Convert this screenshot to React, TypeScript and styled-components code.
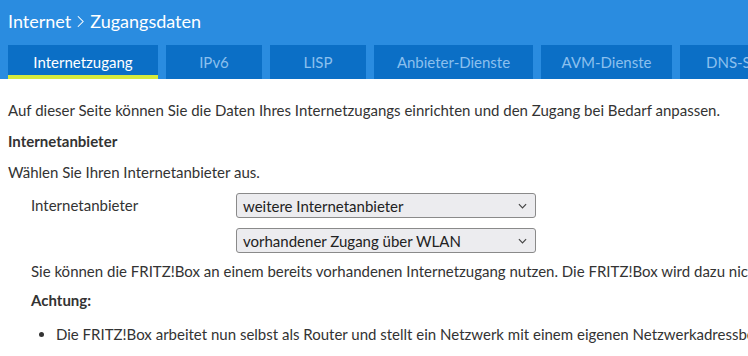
import React from "react";
import styled, { createGlobalStyle } from "styled-components";

const GlobalStyle = createGlobalStyle`
  html, body {
    margin: 0;
    padding: 0;
    background: #fff;
    font-family: "Lato", "Open Sans", sans-serif;
    color: #333;
  }
`;

const tabs = [
  { label: "Internetzugang", width: 150 },
  { label: "IPv6", width: 96 },
  { label: "LISP", width: 96 },
  { label: "Anbieter-Dienste", width: 159 },
  { label: "AVM-Dienste", width: 131 },
  { label: "DNS-Server", width: 131 },
];

const App = () => {
  return (
    <Wrapper>
      <GlobalStyle />
      <Header>
        <Title>
          Internet
          <Chevron viewBox="0 0 8 14">
            <path d="M1 1 L7 7 L1 13" fill="none" stroke="#fff" strokeWidth="1.2" />
          </Chevron>
          Zugangsdaten
        </Title>
        <TabBar>
          {tabs.map((t, i) => (
            <Tab key={t.label} $active={i === 0} style={{ width: t.width }}>
              {t.label}
            </Tab>
          ))}
        </TabBar>
      </Header>
      <Content>
        <Para>
          Auf dieser Seite können Sie die Daten Ihres Internetzugangs einrichten und den Zugang bei Bedarf anpassen.
        </Para>
        <Heading>Internetanbieter</Heading>
        <Para>Wählen Sie Ihren Internetanbieter aus.</Para>
        <FormRow>
          <Label>Internetanbieter</Label>
          <Selects>
            <Select>
              weitere Internetanbieter
              <Caret />
            </Select>
            <Select>
              vorhandener Zugang über WLAN
              <Caret />
            </Select>
          </Selects>
        </FormRow>
        <Indented>
          <Para>
            Sie können die FRITZ!Box an einem bereits vorhandenen Internetzugang nutzen. Die FRITZ!Box wird dazu nicht
            an ein DSL-Kabel angeschlossen.
          </Para>
          <Warn>Achtung:</Warn>
          <List>
            <li>
              Die FRITZ!Box arbeitet nun selbst als Router und stellt ein Netzwerk mit einem eigenen Netzwerkadressbereich
              bereit.
            </li>
          </List>
        </Indented>
      </Content>
    </Wrapper>
  );
};

const Caret = () => (
  <CaretIcon viewBox="0 0 10 6">
    <path d="M1 1 L5 5 L9 1" fill="none" stroke="#444" strokeWidth="1.3" />
  </CaretIcon>
);

export default App;

const Wrapper = styled.div`
  width: 748px;
  height: 356px;
  overflow: hidden;
`;

const Header = styled.header`
  background: #2a8ce0;
  padding: 0 0 0 8px;
  height: 79px;
  display: flex;
  flex-direction: column;
`;

const Title = styled.h1`
  margin: 0;
  height: 45px;
  display: flex;
  align-items: center;
  gap: 6px;
  padding-bottom: 3px;
  box-sizing: border-box;
  color: #fff;
  font-size: 18px;
  font-weight: 400;
`;

const Chevron = styled.svg`
  width: 7px;
  height: 13px;
`;

const TabBar = styled.div`
  display: flex;
  gap: 8px;
  flex: 1;
  white-space: nowrap;
`;

const Tab = styled.div<{ $active?: boolean }>`
  flex: none;
  box-sizing: border-box;
  background: #0b6fc6;
  color: ${(p) => (p.$active ? "#fff" : "#8cc0ee")};
  font-size: 15px;
  display: flex;
  align-items: center;
  justify-content: center;
  overflow: hidden;
  border-bottom: 4px solid ${(p) => (p.$active ? "#d6ea3d" : "transparent")};
  padding-top: 4px;
`;

const Content = styled.main`
  padding: 16px 8px 0;
  font-size: 15px;
  white-space: nowrap;
`;

const Para = styled.p`
  margin: 0;
  line-height: 31px;
`;

const Heading = styled.p`
  margin: 0;
  line-height: 31px;
  font-weight: 700;
`;

const FormRow = styled.div`
  display: flex;
  padding: 5px 0 0 23px;
`;

const Label = styled.div`
  width: 205px;
  line-height: 25px;
`;

const Selects = styled.div`
  display: flex;
  flex-direction: column;
  gap: 10px;
`;

const Select = styled.div`
  width: 300px;
  height: 25px;
  box-sizing: border-box;
  border: 1px solid #8a8a8a;
  border-radius: 3px;
  background: #ececef;
  display: flex;
  align-items: center;
  justify-content: space-between;
  padding: 0 8px 0 6px;
  color: #222;
`;

const CaretIcon = styled.svg`
  width: 9px;
  height: 6px;
`;

const Indented = styled.div`
  padding: 3px 0 0 23px;
`;

const Warn = styled.p`
  margin: 0;
  line-height: 26px;
  font-weight: 700;
`;

const List = styled.ul`
  margin: 10px 0 0;
  padding-left: 25px;
  line-height: 22px;
`;
